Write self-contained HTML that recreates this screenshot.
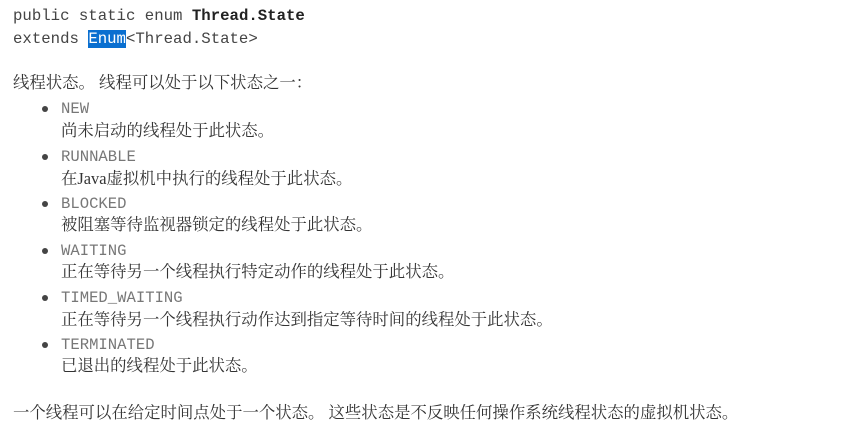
<!DOCTYPE html>
<html><head><meta charset="utf-8"><style>
body{margin:0;width:843px;height:429px;background:#fff;position:relative;overflow:hidden;font-family:"Liberation Serif","Noto Serif CJK SC",serif;color:#333}
.a{position:absolute;white-space:nowrap;line-height:20px}
.m{font-family:"Liberation Mono",monospace;font-size:15.7px;color:#444}
.l{font-family:"Liberation Mono",monospace;font-size:15.6px;color:#777;left:61px}
.c{font-size:16.4px;color:#333}
.d{left:61px}
.b{position:absolute;left:42px;width:6px;height:6px;border-radius:50%;background:#444}
.hl{background:#0a6fd0;color:#fff}
</style></head><body>
<div class="a m" style="left:13px;top:6px">public static enum <b style="color:#222">Thread.State</b></div>
<div class="a m" style="left:13px;top:29px">extends <span class="hl">Enum</span>&lt;Thread.State&gt;</div>
<div class="a c" style="left:13px;top:73px">线程状态。 线程可以处于以下状态之一：</div>

<div class="b" style="top:106px"></div><div class="a l" style="top:99px">NEW</div>
<div class="a c d" style="top:121px">尚未启动的线程处于此状态。</div>
<div class="b" style="top:154px"></div><div class="a l" style="top:147px">RUNNABLE</div>
<div class="a c d" style="top:169px">在Java虚拟机中执行的线程处于此状态。</div>
<div class="b" style="top:201px"></div><div class="a l" style="top:194px">BLOCKED</div>
<div class="a c d" style="top:215px">被阻塞等待监视器锁定的线程处于此状态。</div>
<div class="b" style="top:248px"></div><div class="a l" style="top:241px">WAITING</div>
<div class="a c d" style="top:262px">正在等待另一个线程执行特定动作的线程处于此状态。</div>
<div class="b" style="top:295px"></div><div class="a l" style="top:288px">TIMED_WAITING</div>
<div class="a c d" style="top:310px">正在等待另一个线程执行动作达到指定等待时间的线程处于此状态。</div>
<div class="b" style="top:342px"></div><div class="a l" style="top:335px">TERMINATED</div>
<div class="a c d" style="top:356px">已退出的线程处于此状态。</div>

<div class="a c" style="left:13px;top:403px">一个线程可以在给定时间点处于一个状态。 这些状态是不反映任何操作系统线程状态的虚拟机状态。</div>
</body></html>
